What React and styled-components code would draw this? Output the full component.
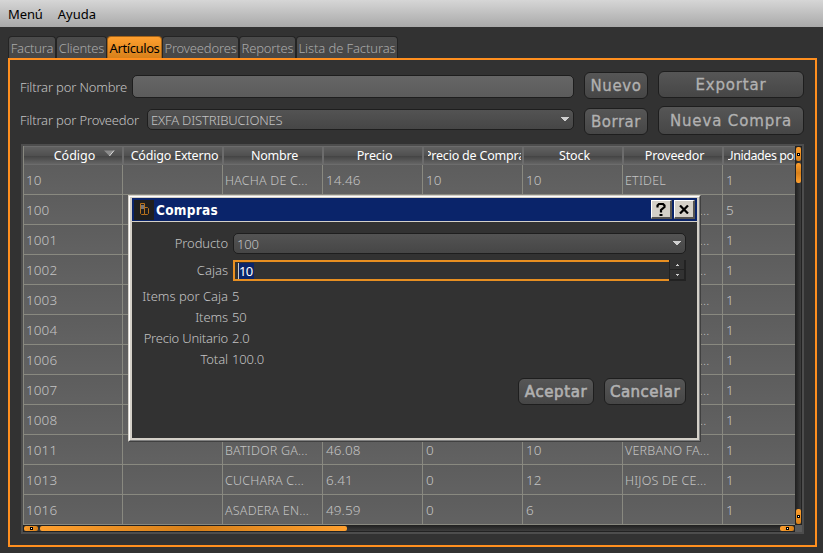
import React from 'react';
import styled, { createGlobalStyle, css } from 'styled-components';

const Global = createGlobalStyle`
  * { box-sizing: border-box; }
  body { margin: 0; background: #323232; overflow: hidden; }
`;
const ui = '"Noto Sans", "DejaVu Sans", sans-serif';
const wide = '"DejaVu Sans", Verdana, sans-serif';

const Window = styled.div`
  position: relative; width: 823px; height: 553px; overflow: hidden;
  background: #323232; color: #c3c3c3; font: 300 13px/16px ${ui};
  letter-spacing: -0.16px; white-space: nowrap;
`;
const MenuBar = styled.div`
  display: flex; gap: 15px; height: 27px; padding: 5px 8px 0; color: #000;
  font-weight: 400; font-size: 13px; line-height: 18px;
  background: linear-gradient(#d6d6d6, #a9a9a9);
`;
const MenuItem = styled.span`letter-spacing: ${p => p.$ls || 0}px;`;
const Tabs = styled.div`display: flex; height: 31px; padding: 9px 0 0 8px; align-items: stretch;`;
const Tab = styled.div`
  width: ${p => p.$w}px; height: 22px; padding-top: 3px; text-align: center;
  display: flex; justify-content: center;
  border: 1px solid #242424; border-bottom: 0; border-radius: 4px 4px 0 0;
  letter-spacing: ${p => p.$ls ?? -0.16}px;
  color: #aaa; background: linear-gradient(#4b4b4b, #474747);
  ${p => p.$active && css`color: #000; font-weight: 400; border-color: #a56419; background: linear-gradient(#ffa02f, #d7801a);`}
`;
const Pane = styled.div`
  width: 809px; height: 489px; margin-left: 8px; border: 2px solid #ff8f1f;
  padding: 0 11px;
`;
const Filters = styled.div`display: flex; height: 84px; padding-top: 10px; margin-left: -1px;`;
const Fields = styled.div`width: 554px; padding-top: 5px;`;
const Field = styled.div`display: flex; align-items: center; height: 23px; margin-bottom: ${p => p.$gap || 0}px;`;
const Label = styled.span`width: ${p => p.$w}px; letter-spacing: ${p => p.$ls ?? -0.16}px;`;
const Input = styled.div`
  flex: 1; height: 23px; border: 1px solid #1e1e1e; border-radius: 5px;
  background: linear-gradient(#666, #5b5b5b);
`;
const Combo = styled.div`
  flex: ${p => p.$w ? 'none' : 1}; ${p => p.$w && `width: ${p.$w}px;`}
  height: 21px; display: flex; align-items: center; justify-content: space-between;
  padding: 0 4px 0 3px; border: 1px solid #1e1e1e; border-radius: 5px;
  background: linear-gradient(#535353, #464646);
`;
const ButtonColumn = styled.div`display: flex; flex-direction: column; width: ${p => p.$w}px; margin-left: 10px; padding-top: ${p => p.$top}px; gap: ${p => p.$gap}px;`;
const Button = styled.div`
  width: ${p => p.$w}px; height: ${p => p.$h || 27}px; display: flex; align-items: center; justify-content: center;
  border: 1px solid #1e1e1e; border-radius: 6px; background: linear-gradient(#565656, #464646);
  color: #b1b1b1; font: 400 15px/20px ${wide}; letter-spacing: ${p => p.$ls || 0}px;
  -webkit-text-stroke: ${p => p.$strong ? 0.6 : 0.3}px #b1b1b1;
`;
const Frame = styled.div`width: 783px; height: 390px; border: 2px solid #4d4d4d; background: #5b5b5b;`;
const View = styled.div`display: flex; height: 379px;`;
const Grid = styled.div`width: 772px; overflow: hidden; border-left: 1px solid #898980; background: #5f5f5f;`;
const Row = styled.div`display: flex; width: 800px; height: ${p => p.$head ? 19 : 30}px;`;
const Head = styled.div`
  width: 100px; flex: none; padding: 0 1px 0 4px;
  border: 1px solid #6c6c6c; border-width: 1px 2px 1px 0;
  background: linear-gradient(#616161 0%, #505050 50%, #434343 52%, #656565 100%);
  color: #fff; font-weight: 400; font-size: 12.5px; letter-spacing: ${p => p.$ls ?? -0.2}px;
`;
const HeadText = styled.div`display: flex; justify-content: center; align-items: center; height: 17px; overflow: hidden;`;
const SortArrow = styled.svg`margin: -5px -20px 0 9px; flex: none;`;
const Cell = styled.div`
  width: ${p => p.$first ? 99 : 100}px; flex: none; height: 30px; overflow: hidden;
  padding: ${p => p.$text ? 8 : 7}px 0 0 ${p => p.$pad}px; border: 1px solid #898980; border-width: 0 1px 1px 0;
  background: linear-gradient(#5d5d5d, #626262);
  font-size: ${p => p.$text ? 12.5 : 13.5}px; letter-spacing: ${p => p.$text ? 0.2 : 0.1}px;
`;
const Bar = styled.div`
  display: flex; flex-direction: ${p => p.$v ? 'column' : 'row'};
  width: ${p => p.$v ? 7 : 772}px; height: ${p => p.$v ? 379 : 7}px; border: 1px solid #222;
  background: linear-gradient(${p => p.$v ? '90deg' : '180deg'}, #242424, #3d3d3d);
`;
const Thumb = styled.div`
  ${p => p.$v ? 'height' : 'width'}: ${p => p.$len}px; border-radius: 2px;
  background: linear-gradient(${p => p.$v ? '180deg' : '90deg'}, #ffa02f, #d7801a ${p => p.$end ? 100 : 50}%, ${p => p.$end ? '#d7801a' : '#ffa02f'});
  margin: ${p => p.$m}; display: flex; align-items: center; justify-content: center; flex: none;
`;
const Dot = styled.i`width: 3px; height: 3px; border: 1px solid #000; background: #fff;`;

const Dialog = styled.div`
  position: absolute; left: 128px; top: 195px; width: 573px; height: 247px;
  background: #323232; border: 1px solid #d4d0c8; border-right-color: #404040; border-bottom-color: #404040;
`;
const DialogEdge = styled.div`
  height: 245px; border: 1px solid #fff; border-right-color: #808080; border-bottom-color: #808080;
`;
const DialogInner = styled.div`height: 243px; border: 2px solid #d4d0c8; border-top-width: 1px;`;
const TitleBar = styled.div`
  display: flex; align-items: center; height: 24px; padding: 0 2px 0 2px; border-bottom: 1px solid #d4d0c8;
  background: #0a246a; color: #fff; font: 700 13.5px/20px "DejaVu Sans Condensed", "DejaVu Sans", sans-serif;
`;
const AppIcon = styled.svg`margin-right: 2px;`;
const Title = styled.span`flex: 1; letter-spacing: 0.3px; padding-top: 1px;`;
const CaptionButton = styled.div`
  width: 21px; height: 19px; margin-left: 2px; display: flex; align-items: center; justify-content: center;
  background: #d4d0c8; border: 1px solid #fff; border-right: 2px solid #565451; border-bottom: 2px solid #565451;
`;
const Form = styled.div`display: flex; flex-direction: column; padding-top: 11px;`;
const FormRow = styled.div`display: flex; align-items: center; height: 21px; margin-bottom: ${p => p.$gap || 0}px;`;
const FormLabel = styled.span`
  width: 96px; margin-right: ${p => p.$field ? 5 : 4}px; padding-bottom: ${p => p.$field ? 2 : 0}px;
  text-align: right; letter-spacing: ${p => p.$ls ?? -0.1}px;
`;
const Spin = styled.div`display: flex; width: 453px; height: 21px;`;
const SpinText = styled.div`
  width: 436px; border: 2px solid #e88f21; border-right: 0; padding: 1px 0 0 3px; background: #323232;
`;
const Selection = styled.span`
  display: inline-block; height: 16px; border-left: 1px solid #ccc; color: #fff; background: #0a246a; font-weight: 400; line-height: 17px;
  letter-spacing: -0.6px; padding-right: 1px;
`;
const Steps = styled.div`width: 17px; border: 1px solid #222; border-width: 0 2px 1px 1px;`;
const Step = styled.div`height: 10px; display: flex; align-items: center; justify-content: center; border-bottom: 1px solid #222;`;
const Actions = styled.div`display: flex; gap: 10px; justify-content: flex-end; padding: 9px 11px 0 0;`;

const Down = () => <svg width="8" height="5"><path d="M0 0h8v1H0zM1 1h6v1H1zM2 2h4v1H2zM3 3h2v1H3z" fill="#cfcfcf" /></svg>;
const Tri = ({ up }) => <svg width="3" height="2"><path d={up ? 'M1 0h1v1h1v1H0V1h1z' : 'M0 0h3v1H2v1H1V1H0z'} fill="#ccc" /></svg>;

const heads = [['Código', 0], ['Código Externo', -0.2], ['Nombre', -0.25], ['Precio', -0.1], ['Precio de Compra', -0.2], ['Stock', -0.1], ['Proveedor', -0.15], ['Unidades por Caja', -0.45]];
const rows = [
  ['10', '', 'HACHA DE C...', '14.46', '10', '10', 'ETIDEL', '1'],
  ['100', '', '', '', '', '', 'VERBANO FA...', '5'],
  ['1001', '', '', '', '', '', 'VERBANO FA...', '1'],
  ['1002', '', '', '', '', '', 'HIJOS DE CE...', '1'],
  ['1003', '', '', '', '', '', 'VERBANO FA...', '1'],
  ['1004', '', '', '', '', '', 'VERBANO FA...', '1'],
  ['1006', '', '', '', '', '', 'VERBANO FA...', '1'],
  ['1007', '', '', '', '', '', 'VERBANO FA...', '1'],
  ['1008', '', '', '', '', '', 'HIJOS DE CE...', '1'],
  ['1011', '', 'BATIDOR GA...', '46.08', '0', '10', 'VERBANO FA...', '1'],
  ['1013', '', 'CUCHARA C...', '6.41', '0', '12', 'HIJOS DE CE...', '1'],
  ['1016', '', 'ASADERA EN...', '49.59', '0', '6', '', '1'],
];
const pads = [2, 3, 2, 3, 3, 3, 2, 3];

export default function App() {
  return (
    <Window>
      <Global />
      <MenuBar><MenuItem $ls={-0.1}>Menú</MenuItem><MenuItem $ls={0}>Ayuda</MenuItem></MenuBar>
      <Tabs>
        <Tab $w={48}>Factura</Tab><Tab $w={51}>Clientes</Tab><Tab $w={55} $ls={-0.4} $active>Artículos</Tab>
        <Tab $w={77}>Proveedores</Tab><Tab $w={57}>Reportes</Tab><Tab $w={102} $ls={-0.1}>Lista de Facturas</Tab>
      </Tabs>
      <Pane>
        <Filters>
          <Fields>
            <Field $gap={10}><Label $w={112}>Filtrar por Nombre</Label><Input /></Field>
            <Field><Label $w={127}>Filtrar por Proveedor</Label><Combo>EXFA DISTRIBUCIONES<Down /></Combo></Field>
          </Fields>
          <ButtonColumn $w={64} $top={2} $gap={9}>
            <Button $w={64} $ls={0.6}>Nuevo</Button><Button $w={64} $ls={0.5}>Borrar</Button>
          </ButtonColumn>
          <ButtonColumn $w={146} $top={1} $gap={8}>
            <Button $w={146} $ls={0.8}>Exportar</Button><Button $w={146} $h={29} $ls={0.85}>Nueva Compra</Button>
          </ButtonColumn>
        </Filters>
        <Frame>
          <View>
            <Grid>
              <Row $head>
                {heads.map(([t, ls], i) => (
                  <Head key={t} $ls={ls}><HeadText><span>{t}</span>
                    {!i && <SortArrow width="11" height="7"><path d="M0 .5h10L5.5 6z" fill="#8c8c8c" /><path d="M10 .5L5.5 6" stroke="#ddd" /></SortArrow>}
                  </HeadText></Head>
                ))}
              </Row>
              {rows.map(r => (
                <Row key={r[0]}>{r.map((t, i) => <Cell key={i} $first={!i} $pad={pads[i]} $text={i === 2 || i === 6}>{t}</Cell>)}</Row>
              ))}
            </Grid>
            <Bar $v>
              <Thumb $v $end $len={14} $m="0 0 2px"><Dot /></Thumb>
              <Thumb $v $len={20} $m="0 0 auto" />
              <Thumb $v $end $len={15} $m="0"><Dot /></Thumb>
            </Bar>
          </View>
          <Bar>
            <Thumb $end $len={14} $m="0 2px 0 0"><Dot /></Thumb>
            <Thumb $len={307} $m="0 auto 0 0" />
            <Thumb $end $len={14} $m="0"><Dot /></Thumb>
          </Bar>
        </Frame>
      </Pane>

      <Dialog><DialogEdge><DialogInner>
        <TitleBar>
          <AppIcon width="20" height="20"><path d="M0 0h20v20H0z" fill="#1f1f1f" /><path d="M6.5 3.5h4v11h-3l-1-1zM6.5 8.5h4M10.5 7.5h3l1 1v5l-1 1h-3" fill="none" stroke="#b8721d" /><path d="M7 5h3v4H7z" fill="#777" /></AppIcon>
          <Title>Compras</Title>
          <CaptionButton><svg width="10" height="13"><path d="M1.5 4.5V2.5L3 1h4l1.5 1.5v1.5L5 7v2.5" fill="none" stroke="#000" strokeWidth="2.2" /><path d="M3.5 11h3v2h-3z" /></svg></CaptionButton>
          <CaptionButton><svg width="10" height="9"><path d="M1 .5l8 8M9 .5l-8 8" stroke="#000" strokeWidth="2.2" /></svg></CaptionButton>
        </TitleBar>
        <Form>
          <FormRow $gap={6}><FormLabel $field>Producto</FormLabel><Combo $w={453}>100<Down /></Combo></FormRow>
          <FormRow $gap={4}><FormLabel $field $ls={0}>Cajas</FormLabel>
            <Spin><SpinText><Selection>10</Selection></SpinText><Steps><Step><Tri up /></Step><Step><Tri /></Step></Steps></Spin>
          </FormRow>
          <FormRow><FormLabel $ls={0}>Items por Caja</FormLabel>5</FormRow>
          <FormRow><FormLabel>Items</FormLabel>50</FormRow>
          <FormRow><FormLabel $ls={-0.2}>Precio Unitario</FormLabel>2.0</FormRow>
          <FormRow><FormLabel>Total</FormLabel>100.0</FormRow>
        </Form>
        <Actions><Button $strong $w={76} $ls={0.6}>Aceptar</Button><Button $strong $w={82} $ls={0.5}>Cancelar</Button></Actions>
      </DialogInner></DialogEdge></Dialog>
    </Window>
  );
}
